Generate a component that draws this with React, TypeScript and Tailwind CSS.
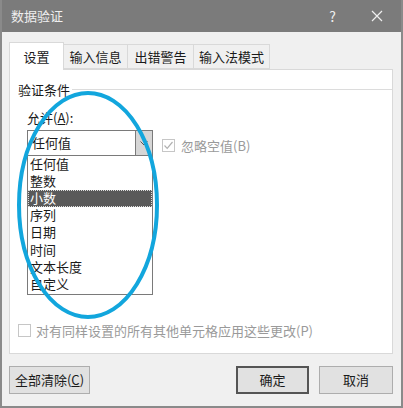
import React from "react";

const font = { fontFamily: '"Microsoft YaHei", "Noto Sans CJK SC", "Noto Sans", sans-serif' };
const listFont = { fontFamily: '"Liberation Sans", "Noto Sans CJK SC", sans-serif' };

const items = ["任何值", "整数", "小数", "序列", "日期", "时间", "文本长度", "自定义"];

export default function App() {
  return (
    <div className="relative w-[403px] h-[408px] bg-[#f0f0f0] overflow-hidden text-[13px] text-[#1a1a1a]" style={font}>
      <div className="absolute inset-0 border-l-[2px] border-r-[2px] border-b-[2px] border-[#8a8a8a] pointer-events-none z-10" />
      {/* title bar */}
      <div className="h-[32px] bg-[#7b7b7b] flex items-center justify-between pl-[11px] pr-[20px] text-white">
        <span className="text-[13px] text-[#efefef]">数据验证</span>
        <div className="flex items-center gap-[35px]">
          <span className="text-[14px] text-[#efefef]">?</span>
          <svg width="12" height="12" viewBox="0 0 12 12">
            <path d="M1 1 L11 11 M11 1 L1 11" stroke="#efefef" strokeWidth="1.2" />
          </svg>
        </div>
      </div>
      {/* tabs */}
      <div className="pl-[9px] pt-[9px] flex items-end">
        <div className="h-[28px] w-[55px] bg-white border border-b-0 border-[#d9d9d9] flex items-center justify-center relative top-[1px] z-[1]">设置</div>
        <div className="h-[25px] w-[64px] border border-l-0 border-[#d9d9d9] flex items-center justify-center">输入信息</div>
        <div className="h-[25px] w-[66px] border border-l-0 border-[#d9d9d9] flex items-center justify-center">出错警告</div>
        <div className="h-[25px] w-[76px] border border-l-0 border-[#d9d9d9] flex items-center justify-center">输入法模式</div>
      </div>
      {/* panel */}
      <div className="ml-[9px] w-[384px] h-[285px] bg-white border border-[#d9d9d9] relative">
        <div className="flex items-center mt-[10px] ml-[8px]">
          <span>验证条件</span>
          <div className="flex-1 h-px bg-[#dcdcdc] ml-[2px]" />
        </div>
        <div className="ml-[17px] mt-[8px]">允许(<span className="underline">A</span>):</div>
        <div className="ml-[17px] mt-[3px] flex items-start gap-[9px]">
          <div className="w-[126px]">
            <div className="h-[26px] border border-[#7a7a7a] flex items-center">
              <span className="flex-1 pl-[4px]">任何值</span>
              <div className="w-[17px] h-full bg-[#d6d6d6] border-l border-[#7a7a7a] flex items-center justify-center">
                <svg width="8" height="5" viewBox="0 0 8 5">
                  <path d="M0.5 0.5 L4 4 L7.5 0.5" stroke="#555" fill="none" strokeWidth="1" />
                </svg>
              </div>
            </div>
            <div className="border border-t-0 border-[#7a7a7a] bg-white pb-[1px]" style={listFont}>
              {items.map((t) => (
                <div
                  key={t}
                  className={
                    t === "小数"
                      ? "h-[17.1px] flex items-center leading-none text-[13px] pl-[1px] bg-[#5a5a5a] text-white border border-dotted border-[#ddd]"
                      : "h-[17.1px] flex items-center leading-none text-[13px] pl-[2px]"
                  }
                >
                  {t}
                </div>
              ))}
            </div>
          </div>
          <div className="flex items-center gap-[6px] mt-[6px] text-[#9a9a9a]">
            <div className="w-[13px] h-[13px] border border-[#c6c6c6] flex items-center justify-center">
              <svg width="11" height="11" viewBox="0 0 11 11">
                <path d="M1.5 5.5 L4.2 8.3 L9.5 2" stroke="#b0b0b0" fill="none" strokeWidth="1.2" />
              </svg>
            </div>
            <span>忽略空值(B)</span>
          </div>
        </div>
        <div className="absolute left-[8px] top-[251px] flex items-center gap-[5px] text-[#9a9a9a]">
          <div className="w-[13px] h-[13px] border border-[#c6c6c6] bg-white" />
          <span>对有同样设置的所有其他单元格应用这些更改(P)</span>
        </div>
      </div>
      {/* buttons */}
      <div className="mt-[12px] ml-[9px] mr-[10px] flex items-center">
        <div className="w-[81px] h-[28px] bg-[#e1e1e1] border border-[#adadad] flex items-center justify-center">全部清除(<span className="underline">C</span>)</div>
        <div className="flex-1" />
        <div className="w-[73px] h-[28px] bg-[#e1e1e1] border-2 border-[#555] flex items-center justify-center">确定</div>
        <div className="w-[74px] h-[28px] ml-[10px] bg-[#e1e1e1] border border-[#adadad] flex items-center justify-center">取消</div>
      </div>
      {/* annotation ellipse */}
      <svg className="absolute left-0 top-0 pointer-events-none z-20" width="403" height="408">
        <ellipse cx="88" cy="205" rx="69" ry="112" fill="none" stroke="#12a6dd" strokeWidth="4" />
      </svg>
    </div>
  );
}
